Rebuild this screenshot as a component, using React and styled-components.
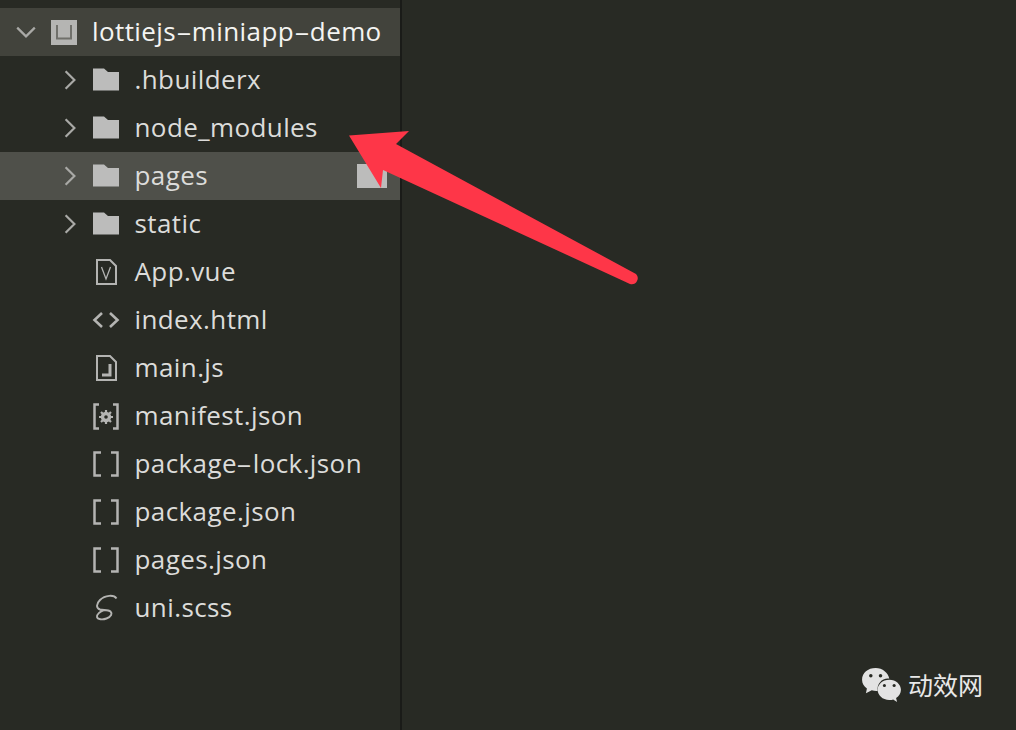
import styled, { createGlobalStyle } from "styled-components";

const GlobalStyle = createGlobalStyle`
  html, body {
    margin: 0;
    padding: 0;
    background: #282a24;
  }
`;

const files = [
  { name: ".hbuilderx", type: "folder" },
  { name: "node_modules", type: "folder" },
  { name: "pages", type: "folder", active: true },
  { name: "static", type: "folder" },
  { name: "App.vue", type: "vue" },
  { name: "index.html", type: "html" },
  { name: "main.js", type: "js" },
  { name: "manifest.json", type: "manifest" },
  { name: "package-lock.json", type: "json" },
  { name: "package.json", type: "json" },
  { name: "pages.json", type: "json" },
  { name: "uni.scss", type: "scss" },
];

// hyphens are much wider in the original ui font
function withDashes(name) {
  return name.split("-").map((part, i) => (
    <span key={i}>
      {i > 0 && <Dash>-</Dash>}
      {part}
    </span>
  ));
}

function Chevron({ down }) {
  return (
    <ChevronSvg viewBox="0 0 20 20">
      <path
        d={down ? "M2 6l8 8 8-8" : "M6 2l8 8-8 8"}
        fill="none"
        stroke="#a9a9a6"
        strokeWidth="2"
      />
    </ChevronSvg>
  );
}

function FileIcon({ type }) {
  const stroke = "#b4b4b2";
  return (
    <IconSvg viewBox="0 0 28 28">
      {type === "folder" && (
        <path d="M1 3.500h11l4 4h11v21H1z" fill="#bcbcbb" transform="translate(0 -0.500) scale(1 0.880)" />
      )}
      {type === "vue" && (
        <>
          <path d="M5 2h13l6 6v18H5z" fill="none" stroke={stroke} strokeWidth="2" />
          <path d="M9.500 9l4.500 12 4.500-12" fill="none" stroke={stroke} strokeWidth="1.300" />
        </>
      )}
      {type === "js" && (
        <>
          <path d="M5 2h13l6 6v18H5z" fill="none" stroke={stroke} strokeWidth="2" />
          <path d="M18 10v11h-8" fill="none" stroke={stroke} strokeWidth="3" />
        </>
      )}
      {type === "html" && (
        <path
          d="M10 7l-7.500 7 7.500 7M18 7l7.500 7-7.500 7"
          fill="none"
          stroke={stroke}
          strokeWidth="2.600"
        />
      )}
      {type === "json" && (
        <path
          d="M9 2.500H2.500v23H9M19 2.500h6.500v23H19"
          fill="none"
          stroke={stroke}
          strokeWidth="2.500"
        />
      )}
      {type === "manifest" && (
        <>
          <path
            d="M7 2.500H2.500v24H7M21 2.500h4.500v24H21"
            fill="none"
            stroke={stroke}
            strokeWidth="2.500"
          />
          <circle cx="14" cy="15" r="3.500" fill="none" stroke={stroke} strokeWidth="3.400" />
          <path
            d="M14 8v3M14 19v3M7 15h3M18 15h3M9 10l2 2M17 18l2 2M19 10l-2 2M11 18l-2 2"
            stroke={stroke}
            strokeWidth="2.200"
          />
        </>
      )}
      {type === "scss" && (
        <path
          d="M24.500 4.500C22 .5 13 1 8 6c-4 4-4 8 0 9.500 3 1 8 0 10.500 2 2 2 1 5-4 7-4 1.500-9 1-9.500-1.500-.5-2.500 3-5.500 7-7"
          fill="none"
          stroke={stroke}
          strokeWidth="1.900"
        />
      )}
    </IconSvg>
  );
}

export default function App() {
  return (
    <Screen>
      <GlobalStyle />
      <Sidebar>
        <ProjectRow>
          <ProjectChevron>
            <Chevron down />
          </ProjectChevron>
          <ProjectBadge>
            <svg width="16" height="15" viewBox="0 0 16 15">
              <path d="M1 0v13.500h14V0" fill="none" stroke="#70706b" strokeWidth="2" />
            </svg>
          </ProjectBadge>
          <ProjectName>{withDashes("lottiejs-miniapp-demo")}</ProjectName>
        </ProjectRow>
        {files.map((f) => (
          <Row key={f.name} $active={f.active}>
            <ChevronSlot>{f.type === "folder" && <Chevron />}</ChevronSlot>
            <IconSlot>
              <FileIcon type={f.type} />
            </IconSlot>
            <FileName>{withDashes(f.name)}</FileName>
            {f.active && <RowMarker />}
          </Row>
        ))}
      </Sidebar>
      <Divider />
      <Editor>
        <Watermark>
          <svg width="41" height="35" viewBox="0 0 42 36">
            <path
              d="M15 1C7 1 1 6 1 13c0 4 2 7 5 9l-1 5 6-3c2 .5 4 1 6 .7C16 17 22 11 29 12 28 6 22 1 15 1z"
              fill="#e3e3e3"
            />
            <path
              d="M29 13c-7 0-12 5-12 10.500S22 34 29 34c2 0 3 0 4-.5l4 2.500-1-4c3-2 5-5 5-8.500C41 18 36 13 29 13z"
              fill="#e3e3e3"
            />
            <circle cx="10" cy="9" r="1.800" fill="#282a24" />
            <circle cx="20" cy="9" r="1.800" fill="#282a24" />
            <circle cx="24" cy="19" r="1.600" fill="#282a24" />
            <circle cx="34" cy="19" r="1.600" fill="#282a24" />
          </svg>
          <WatermarkText>动效网</WatermarkText>
        </Watermark>
      </Editor>
      <Arrow viewBox="0 0 1016 730">
        <path
          d="M349 135.500L409 131 396 144 636 274Q639 277 637 281 635 285 630 284L383 170 381 188z"
          fill="#fe3648"
        />
      </Arrow>
    </Screen>
  );
}

const Screen = styled.div`
  position: relative;
  display: flex;
  width: 1016px;
  height: 730px;
  overflow: hidden;
  background: #282a24;
  font-family: "Open Sans", "Noto Sans", sans-serif;
`;

const Sidebar = styled.div`
  display: flex;
  flex-direction: column;
  width: 400px;
  flex-shrink: 0;
  padding-top: 8px;
  box-sizing: border-box;
`;

const Divider = styled.div`
  width: 2px;
  flex-shrink: 0;
  background: #1a1b18;
`;

const Editor = styled.div`
  flex: 1;
  display: flex;
  align-items: flex-end;
  justify-content: flex-end;
  padding: 0 33px 28px 0;
`;

const ProjectRow = styled.div`
  display: flex;
  align-items: center;
  height: 48px;
  background: #42433c;
`;

const ProjectChevron = styled.div`
  display: flex;
  justify-content: center;
  width: 51px;
`;

const ProjectBadge = styled.div`
  display: flex;
  align-items: center;
  justify-content: center;
  width: 26px;
  height: 25px;
  background: #b5b5b3;
  margin-right: 15px;
`;

const ProjectName = styled.span`
  font-size: 26px;
  color: #f4f4f2;
  letter-spacing: 0.4px;
  white-space: nowrap;
  margin-bottom: 2px;
`;

const Dash = styled.span`
  display: inline-block;
  margin: 0 3.500px;
  transform: scaleX(1.900);
`;

const Row = styled.div`
  display: flex;
  align-items: center;
  height: 48px;
  background: ${(p) => (p.$active ? "#4f504a" : "transparent")};
`;

const ChevronSlot = styled.div`
  display: flex;
  justify-content: center;
  width: 28px;
  margin-left: 56px;
`;

const ChevronSvg = styled.svg`
  width: 22px;
  height: 22px;
`;

const IconSlot = styled.div`
  display: flex;
  justify-content: center;
  width: 28px;
  margin: 0 14.500px 0 8px;
`;

const IconSvg = styled.svg`
  width: 28px;
  height: 28px;
`;

const FileName = styled.span`
  flex: 1;
  font-size: 26px;
  color: #dcdcda;
  letter-spacing: 0.4px;
  white-space: nowrap;
  margin-bottom: 2px;
`;

const RowMarker = styled.div`
  width: 30px;
  height: 24px;
  margin: 0 13px 0 0;
  background: #bcbcbb;
`;

const Watermark = styled.div`
  display: flex;
  align-items: center;
  gap: 6px;
`;

const WatermarkText = styled.span`
  font-family: "Noto Sans CJK SC", sans-serif;
  font-size: 25px;
  color: #e8e8e8;
`;

const Arrow = styled.svg`
  position: absolute;
  inset: 0;
  width: 1016px;
  height: 730px;
  pointer-events: none;
`;
